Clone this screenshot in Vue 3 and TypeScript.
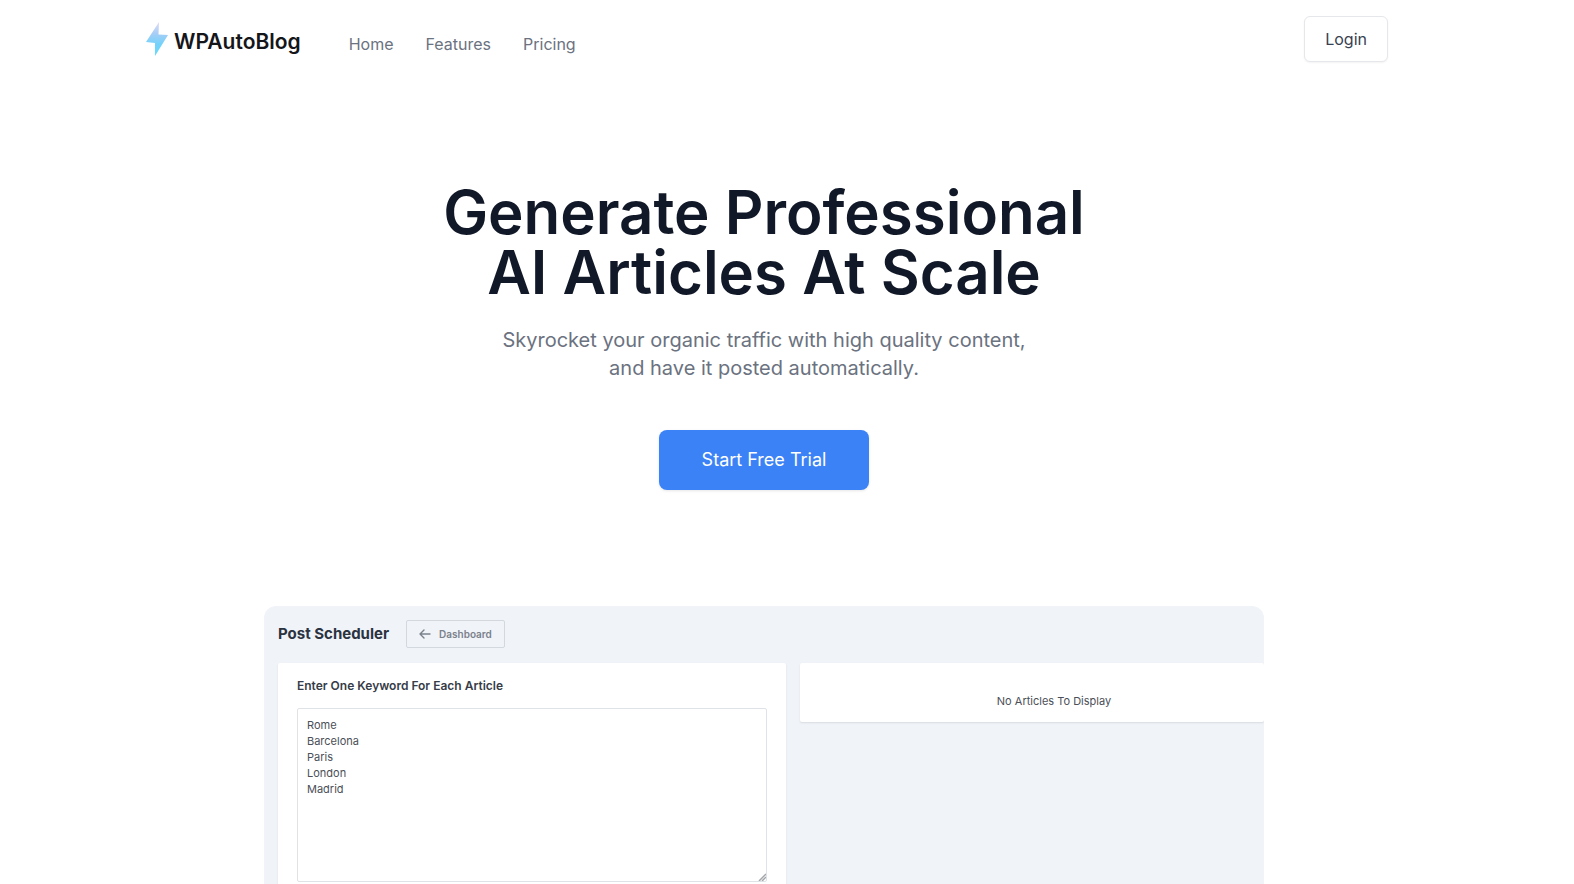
<script setup lang="ts">
import { ref } from 'vue'

interface NavLink {
  label: string
  href: string
}

const links: NavLink[] = [
  { label: 'Home', href: '#home' },
  { label: 'Features', href: '#features' },
  { label: 'Pricing', href: '#pricing' },
]

const keywords = ref(['Rome', 'Barcelona', 'Paris', 'London', 'Madrid'].join('\n'))
</script>

<template>
  <div class="page">
    <header class="header">
      <a class="logo" href="#home">
        <svg class="bolt" viewBox="0 0 22 34" width="22" height="34" aria-hidden="true">
          <defs>
            <linearGradient id="bolt-fill" x1="0" y1="0" x2="0" y2="1">
              <stop offset="0" stop-color="#e3dcf6" />
              <stop offset="0.35" stop-color="#a5cdf6" />
              <stop offset="0.65" stop-color="#74d2fa" />
              <stop offset="1" stop-color="#62dbfc" />
            </linearGradient>
          </defs>
          <path d="M13 0 L0 20 L9 21 L9 34 L22 13 L12.5 12.5 Z" fill="url(#bolt-fill)" />
        </svg>
        <span class="brand">WPAutoBlog</span>
      </a>
      <nav class="nav">
        <a v-for="link in links" :key="link.label" :href="link.href">{{ link.label }}</a>
      </nav>
      <button class="login" type="button">Login</button>
    </header>

    <main>
      <section class="hero">
        <h1>Generate Professional<br />AI Articles At Scale</h1>
        <p>Skyrocket your organic traffic with high quality content,<br />and have it posted automatically.</p>
        <button class="cta" type="button">Start Free Trial</button>
      </section>

      <section class="preview">
        <div class="preview-head">
          <h2>Post Scheduler</h2>
          <button class="back" type="button">
            <svg viewBox="0 0 12 10" width="12" height="10" aria-hidden="true">
              <path d="M11 5 H1 M5 1 L1 5 L5 9" fill="none" stroke="currentColor" stroke-width="1.4" stroke-linecap="round" stroke-linejoin="round" />
            </svg>
            Dashboard
          </button>
        </div>
        <div class="panels">
          <div class="card form">
            <label for="keywords">Enter One Keyword For Each Article</label>
            <div class="field">
              <textarea id="keywords" v-model="keywords" spellcheck="false"></textarea>
              <svg class="grip" viewBox="0 0 8 8" width="8" height="8" aria-hidden="true">
                <path d="M1 8 L8 1 M4 8 L8 4" fill="none" stroke="#a3a6aa" stroke-width="1.5" />
              </svg>
            </div>
          </div>
          <div class="card empty">No Articles To Display</div>
        </div>
      </section>
    </main>
  </div>
</template>

<style>
body {
  margin: 0;
  background: #fff;
}
</style>

<style scoped>
.page {
  box-sizing: border-box;
  height: 100vh;
  overflow: hidden;
  padding-right: 46px;
  font-family: Inter, 'Liberation Sans', sans-serif;
  color: #111827;
}

button {
  font: inherit;
  cursor: pointer;
}

.header {
  box-sizing: border-box;
  display: flex;
  align-items: center;
  max-width: 1280px;
  margin: 0 auto;
  padding: 16px 16px 16px 22px;
}

.logo {
  display: flex;
  align-items: center;
  gap: 6px;
  color: #15161a;
  text-decoration: none;
}

.bolt {
  display: block;
}

.brand {
  padding-top: 6px;
  font-size: 21px;
  line-height: 28px;
  font-weight: 600;
}

.nav {
  display: flex;
  gap: 32px;
  margin-left: 48px;
  padding-top: 10px;
}

.nav a {
  color: #6b7280;
  font-size: 16px;
  line-height: 24px;
  text-decoration: none;
}

.login {
  margin-left: auto;
  padding: 10px 20px;
  border: 1px solid #e5e7eb;
  border-radius: 6px;
  background: #fff;
  color: #374151;
  font-size: 16px;
  line-height: 24px;
  box-shadow: 0 1px 2px rgba(0, 0, 0, 0.05);
}

.hero {
  display: flex;
  flex-direction: column;
  align-items: center;
  padding: 104px 24px 116px;
  text-align: center;
}

h1 {
  margin: 0;
  font-size: 60px;
  line-height: 60px;
  font-weight: 600;
}

.hero p {
  margin: 24px 0 0;
  color: #6b7280;
  font-size: 20px;
  line-height: 28px;
}

.cta {
  margin-top: 48px;
  padding: 16px 43px;
  border: 0;
  border-radius: 8px;
  background: #3b82f6;
  color: #fff;
  font-size: 18px;
  line-height: 28px;
  box-shadow: 0 1px 3px rgba(0, 0, 0, 0.1);
}

.preview {
  box-sizing: border-box;
  max-width: 1000px;
  margin: 0 auto;
  padding: 14px 0 40px 14px;
  border-radius: 12px;
  background: #f0f4f9;
  overflow: hidden;
}

.preview-head {
  display: flex;
  align-items: center;
  gap: 17px;
  margin-bottom: 15px;
}

h2 {
  margin: 0;
  color: #2b3240;
  font-size: 15px;
  line-height: 24px;
  font-weight: 700;
}

.back {
  display: flex;
  align-items: center;
  gap: 8px;
  padding: 5px 12px;
  border: 1px solid #d3d7de;
  border-radius: 2px;
  background: transparent;
  color: #7b818c;
  font-size: 10px;
  line-height: 16px;
  font-weight: 600;
}

.panels {
  display: grid;
  grid-template-columns: 508px 1fr;
  align-items: start;
  gap: 14px;
}

.card {
  border-radius: 2px;
  background: #fff;
  box-shadow: 0 1px 2px rgba(0, 0, 0, 0.1);
}

.form {
  padding: 15px 19px 20px;
}

.form label {
  display: block;
  color: #363c48;
  font-size: 12px;
  line-height: 16px;
  font-weight: 600;
}

.field {
  position: relative;
  margin-top: 14px;
}

textarea {
  box-sizing: border-box;
  display: block;
  width: 100%;
  height: 174px;
  padding: 8px 9px;
  border: 1px solid #dfe2e6;
  border-radius: 2px;
  outline: 0;
  resize: none;
  background: #fff;
  color: #4b4f57;
  font: 11px/16px Inter, 'Liberation Sans', sans-serif;
}

.grip {
  position: absolute;
  right: 1px;
  bottom: 1px;
}

.empty {
  padding: 30px 0 13px 44px;
  color: #4b4f57;
  font-size: 11px;
  line-height: 16px;
  text-align: center;
}
</style>
